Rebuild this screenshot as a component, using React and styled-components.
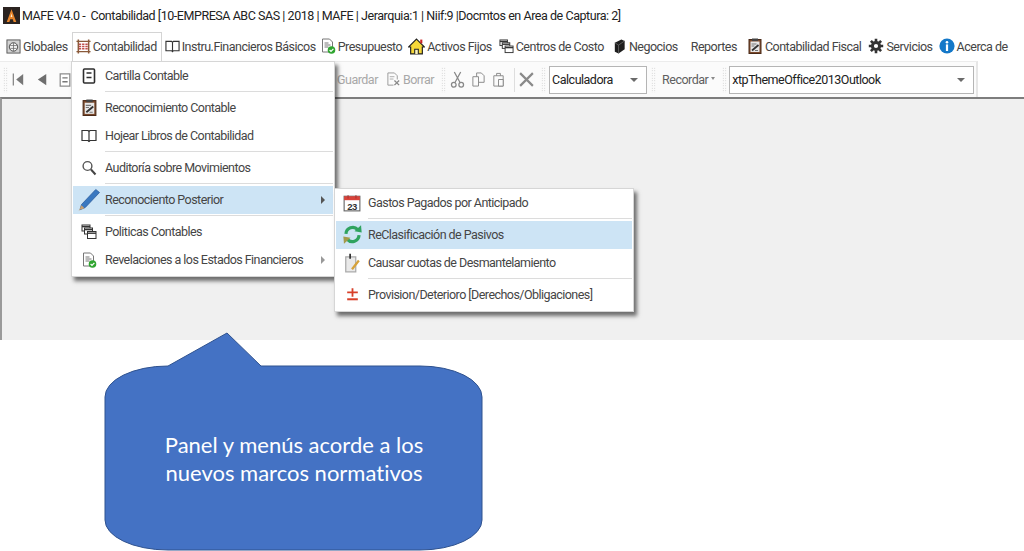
import React from 'react';
import styled, { createGlobalStyle } from 'styled-components';

const GlobalStyle = createGlobalStyle`
  html, body { margin: 0; padding: 0; background: #fff; }
  body { font-family: Roboto, "Liberation Sans", sans-serif; }
`;

const Page = styled.div`
  position: relative;
  width: 1024px;
  height: 551px;
  overflow: hidden;
  background: #fff;
`;

const TitleBar = styled.div`
  display: flex;
  align-items: center;
  height: 31px;
  padding-left: 3px;
  gap: 2px;
  font-size: 12.5px;
  letter-spacing: -0.45px;
  color: #222;
  white-space: pre;
`;

const MenuBar = styled.div`
  display: flex;
  align-items: center;
  height: 30px;
  padding-left: 6px;
`;

const MenuItem = styled.div`
  display: flex;
  align-items: center;
  gap: 2px;
  margin-left: ${(p) => p.$ml || 0}px;
  font-size: 12.5px;
  letter-spacing: -0.5px;
  color: #454545;
  white-space: nowrap;
`;

const ActiveTab = styled(MenuItem)`
  height: 29px;
  box-sizing: border-box;
  width: 90px;
  padding-left: 3px;
  border: 1px solid #d4d4d4;
  border-bottom: 0;
  background: #fff;
  position: relative;
  z-index: 3;
`;

const ToolBar = styled.div`
  display: flex;
  align-items: center;
  height: 36px;
  width: 978px;
  box-sizing: border-box;
  padding-left: 3px;
  border-top: 1px solid #ececec;
  border-right: 2px solid #e6e6e6;
  background: #fbfbfb;
`;

const Grip = styled.div`
  width: 5px;
  height: 26px;
  margin-left: ${(p) => p.$ml || 0}px;
  flex: none;
  background-image: radial-gradient(#c8c8c8 0.7px, transparent 0.8px);
  background-size: 2.5px 2.5px;
`;

const Tool = styled.div`
  display: flex;
  align-items: center;
  flex: none;
  gap: 2px;
  margin-left: ${(p) => p.$ml || 0}px;
  font-size: 12.5px;
  letter-spacing: -0.5px;
  color: ${(p) => (p.$strong ? '#5f5f5f' : '#a8a8a8')};
  white-space: nowrap;
`;

const ToolDivider = styled.div`
  width: 1px;
  height: 24px;
  flex: none;
  margin-left: ${(p) => p.$ml || 0}px;
  background: #dedede;
`;

const Combo = styled.div`
  display: flex;
  align-items: center;
  justify-content: space-between;
  flex: none;
  box-sizing: border-box;
  width: ${(p) => p.$w}px;
  height: 28px;
  margin-left: ${(p) => p.$ml || 0}px;
  padding: 0 8px 0 2px;
  border: 1px solid #b5b5b5;
  background: #fff;
  font-size: 12.5px;
  letter-spacing: -0.5px;
  color: #222;
`;

const ComboArrow = styled.span`
  width: 0;
  height: 0;
  border-left: 4px solid transparent;
  border-right: 4px solid transparent;
  border-top: 4px solid #6a6a6a;
`;

const SmallArrow = styled.span`
  width: 0;
  height: 0;
  margin-top: -3px;
  margin-left: 1px;
  border-left: 2.5px solid transparent;
  border-right: 2.5px solid transparent;
  border-top: 3px solid #8a8a8a;
`;

const Panel = styled.div`
  height: 243px;
  box-sizing: border-box;
  border-top: 2px solid #7d7d7d;
  border-left: 2px solid #9a9a9a;
  background: #f0f0f0;
`;

const Menu = styled.div`
  position: absolute;
  left: ${(p) => p.$left}px;
  top: ${(p) => p.$top}px;
  width: ${(p) => p.$w}px;
  box-sizing: border-box;
  padding-bottom: 2px;
  background: #fff;
  border: 1px solid #d6d6d6;
  box-shadow: 3px 4px 4px rgba(0, 0, 0, 0.55);
  z-index: ${(p) => p.$z || 2};
`;

const Row = styled.div`
  position: relative;
  display: flex;
  align-items: center;
  box-sizing: border-box;
  height: 28px;
  margin: 0 1px;
  padding-bottom: 1px;
  background: ${(p) => (p.$active ? '#cde4f5' : 'transparent')};
  font-size: 12.5px;
  letter-spacing: -0.54px;
  color: #454545;
  white-space: nowrap;
`;

const RowIcon = styled.span`
  display: flex;
  justify-content: center;
  align-items: center;
  width: 32px;
  flex: none;
`;

const RowCaret = styled.span`
  position: absolute;
  right: 8px;
  top: 10px;
  width: 0;
  height: 0;
  border-top: 4px solid transparent;
  border-bottom: 4px solid transparent;
  border-left: 4px solid ${(p) => (p.$dark ? '#555' : '#999')};
`;

const MenuSep = styled.div`
  height: 1px;
  margin: 1px 1px 2px 33px;
  background: #dcdcdc;
`;

const Callout = styled.div`
  position: absolute;
  left: 104px;
  top: 332px;
  width: 380px;
  height: 219px;
  z-index: 4;
`;

const CalloutShape = styled.svg`
  display: block;
  width: 380px;
  height: 219px;
`;

const CalloutText = styled.div`
  position: absolute;
  inset: 34px 0 0 0;
  display: flex;
  align-items: center;
  justify-content: center;
  text-align: center;
  font-family: Lato, "Open Sans", sans-serif;
  font-size: 22px;
  line-height: 28px;
  font-variant-ligatures: none;
  color: #fff;
`;

const Ico = ({ size = 16, children }) => (
  <svg width={size} height={size} viewBox="0 0 16 16" style={{ flex: 'none', display: 'block' }}>
    {children}
  </svg>
);

const AppLogo = () => (
  <Ico size={17}>
    <rect width="16" height="16" fill="#2b2320" />
    <path d="M8 2 L12.5 14 H10 L9.2 11.5 H6.8 L6 14 H3.5Z" fill="#e8862c" />
    <path d="M8 6 L8.8 9.5 H7.2Z" fill="#fff2d8" />
  </Ico>
);
const Globe = () => (
  <Ico size={15}>
    <rect x="1" y="1" width="14" height="14" fill="#d2d2d2" stroke="#555" />
    <circle cx="8" cy="8.5" r="4.5" fill="#f4f4f4" stroke="#444" />
    <path d="M4 7h8M4.5 10h7M8 4v9" stroke="#666" strokeWidth=".8" />
  </Ico>
);
const Abacus = () => (
  <Ico size={15}>
    <path d="M2.5 .5v15M13.5 .5v15" stroke="#8a5a3a" strokeWidth="1.6" />
    <path d="M.5 2.5h15M.5 13.5h15" stroke="#8a5a3a" strokeWidth="1.4" />
    <path d="M3 5.5h10M3 8h10M3 10.5h10" stroke="#c0504d" strokeWidth="1.6" strokeDasharray="2.5 1" />
  </Ico>
);
const Book = ({ size = 15 }) => (
  <Ico size={size}>
    <path d="M1 2.5h6l1 1 1-1h6v10H9l-1 1-1-1H1z" fill="#fff" stroke="#333" strokeWidth="1.2" />
    <path d="M8 3.5v10" stroke="#333" strokeWidth="1.2" />
  </Ico>
);
const DocCheck = () => (
  <Ico size={16}>
    <path d="M2.5 1h7l3 3v10h-10z" fill="#fff" stroke="#777" />
    <path d="M4.5 5h4M4.5 7h6M4.5 9h4" stroke="#777" />
    <circle cx="11.5" cy="12" r="3.8" fill="#2fa52f" />
    <path d="M9.6 12l1.4 1.4 2.4-2.6" stroke="#fff" strokeWidth="1.2" fill="none" />
  </Ico>
);
const House = () => (
  <Ico size={17}>
    <path d="M8 1 L15.5 8.5 H13.5 V15 H2.5 V8.5 H.5Z" fill="#f6d838" stroke="#222" strokeWidth="1.1" />
    <path d="M6.3 15v-4.5h3.4V15" fill="#fff7c0" stroke="#222" />
    <rect x="11.5" y="1.5" width="2" height="3.5" fill="#c22" />
  </Ico>
);
const Windows = ({ size = 15 }) => (
  <Ico size={size}>
    <rect x="1" y="1" width="8" height="6" fill="#fff" stroke="#333" />
    <path d="M1 2.6h8" stroke="#333" strokeWidth="1.4" />
    <rect x="3.5" y="4" width="8" height="6" fill="#fff" stroke="#333" />
    <path d="M3.5 5.6h8" stroke="#333" strokeWidth="1.4" />
    <rect x="6.5" y="7.5" width="8.5" height="7" fill="#fff" stroke="#333" />
    <path d="M6.5 9.2h8.5" stroke="#333" strokeWidth="1.4" />
  </Ico>
);
const BlackBook = () => (
  <Ico size={15}>
    <path d="M3 4 L10 .5 L13.5 2 L13.5 11 L7 15.5 L3 13.5Z" fill="#1e1e1e" />
    <path d="M7 6.5v9M7 6.5l6.5-4.5M3 4l4 2.5" stroke="#777" strokeWidth=".7" fill="none" />
  </Ico>
);
const Clipboard = ({ size = 17 }) => (
  <Ico size={size}>
    <rect x="2" y="1.5" width="12" height="14" fill="#7d4a2c" stroke="#4a2a18" />
    <rect x="3.5" y="3.5" width="9" height="10.5" fill="#e8e8e8" />
    <rect x="5" y=".5" width="6" height="2.5" fill="#444" />
    <path d="M5 12.5 L11.5 7" stroke="#333" strokeWidth="1.8" />
    <path d="M4.5 6h5M4.5 8h3M8 12.5h3" stroke="#777" />
  </Ico>
);
const Gear = () => (
  <Ico size={16}>
    <circle cx="8" cy="8" r="3.6" fill="none" stroke="#333" strokeWidth="3" />
    <path d="M8 .8v3M8 12.2v3M.8 8h3M12.2 8h3M2.9 2.9l2.1 2.1M11 11l2.1 2.1M13.1 2.9L11 5M5 11l-2.1 2.1" stroke="#333" strokeWidth="2.6" />
  </Ico>
);
const Info = () => (
  <Ico size={16}>
    <circle cx="8" cy="8" r="7.6" fill="#1478c8" />
    <circle cx="8" cy="4.2" r="1.3" fill="#fff" />
    <rect x="6.9" y="6.4" width="2.2" height="6.6" fill="#fff" />
  </Ico>
);
const Card = () => (
  <Ico size={16}>
    <rect x="2.5" y="1" width="11" height="14" rx="1" fill="#fff" stroke="#2e2e2e" strokeWidth="1.6" />
    <path d="M5.5 5h5M5.5 9.5h5" stroke="#2e2e2e" strokeWidth="1.7" />
  </Ico>
);
const Lens = () => (
  <Ico size={16}>
    <circle cx="6.5" cy="6" r="4.4" fill="#fff" stroke="#555" strokeWidth="1.4" />
    <path d="M10 9.5l4.5 5" stroke="#444" strokeWidth="2" />
  </Ico>
);
const Pencil = () => (
  <Ico size={24}>
    <path d="M12.5 1 L15 3 L5.5 13 L2 14.5 L3 11Z" fill="#3a78c0" stroke="#2a5a9a" strokeWidth=".5" />
    <path d="M2 14.5 L1 15.5 L3 11.5 L5 13.5Z" fill="#c9a070" />
  </Ico>
);
const Calendar = () => (
  <Ico size={18}>
    <rect x="1" y="2" width="14" height="13" fill="#fff" stroke="#666" />
    <rect x="1" y="2" width="14" height="3.5" fill="#d9423a" />
    <path d="M4.5 1v3M11.5 1v3" stroke="#a33" />
    <text x="8" y="13.8" textAnchor="middle" fontSize="8.5" fontWeight="700" fontFamily="Liberation Sans" fill="#333">23</text>
  </Ico>
);
const Refresh = () => (
  <Ico size={21}>
    <path d="M3 7.5a5.2 5.2 0 0 1 9-3.2" fill="none" stroke="#2fa35f" strokeWidth="2.4" />
    <path d="M9.5 5.5 L15 6.5 L14.5 1Z" fill="#2fa35f" />
    <path d="M13 8.5a5.2 5.2 0 0 1-9 3.2" fill="none" stroke="#2fa35f" strokeWidth="2.4" />
    <path d="M6.5 10.5 L1 9.5 L1.5 15Z" fill="#a39a4a" />
  </Ico>
);
const NotePen = () => (
  <Ico size={20}>
    <path d="M3 3h8v12H3z" fill="#e9e9e9" stroke="#aaa" />
    <path d="M6.5 .5v4" stroke="#333" strokeWidth="1.4" />
    <path d="M13.5 6 L8 13" stroke="#d6a23a" strokeWidth="1.8" />
  </Ico>
);
const PlusMinus = () => (
  <Ico size={17}>
    <path d="M8 2v8M3 6h10" stroke="#d8402a" strokeWidth="1.7" />
    <path d="M3 12.5h10" stroke="#d8402a" strokeWidth="1.9" />
  </Ico>
);
const First = () => (
  <Ico size={15}>
    <path d="M2.5 1.5v13" stroke="#8a8a8a" strokeWidth="1.4" />
    <path d="M13 2v12L5.5 8z" fill="#777" />
  </Ico>
);
const Prev = () => (
  <Ico size={15}>
    <path d="M12 2v12L3 8z" fill="#6e6e6e" />
  </Ico>
);
const SmallCard = () => (
  <Ico size={14}>
    <rect x="2.5" y="1" width="11" height="14" fill="#fff" stroke="#8a8a8a" strokeWidth="1.4" />
    <path d="M5 5.5h6M5 10h6" stroke="#777" strokeWidth="1.5" />
  </Ico>
);
const Eraser = () => (
  <Ico size={15}>
    <path d="M2 1h7l3 3v4M2 1v13h6" fill="none" stroke="#999" />
    <path d="M4 5h5M4 7.5h4" stroke="#aaa" />
    <path d="M9 9l5 5M14 9l-5 5" stroke="#888" strokeWidth="1.4" />
  </Ico>
);
const Scissors = () => (
  <Ico size={17}>
    <path d="M5 1l5.5 10M11 1L5.5 11" stroke="#888" strokeWidth="1.2" />
    <circle cx="4.5" cy="13" r="2.2" fill="none" stroke="#888" strokeWidth="1.2" />
    <circle cx="11.5" cy="13" r="2.2" fill="none" stroke="#888" strokeWidth="1.2" />
  </Ico>
);
const CopyIcon = () => (
  <Ico size={15}>
    <path d="M6 1h5l3 3v7H6z" fill="#fbfbfb" stroke="#888" />
    <path d="M2 5h6v10H2z" fill="#fbfbfb" stroke="#888" />
  </Ico>
);
const PasteIcon = () => (
  <Ico size={15}>
    <path d="M3 4h10v11H3z" fill="none" stroke="#888" />
    <path d="M8 8h5v7H8z" fill="#fbfbfb" stroke="#888" />
    <path d="M6 4V1.5h4V4" fill="none" stroke="#888" />
  </Ico>
);
const Cross = () => (
  <Ico size={17}>
    <path d="M2 2l12 12M14 2L2 14" stroke="#8a8a8a" strokeWidth="2" />
  </Ico>
);

export default function App() {
  return (
    <Page>
      <GlobalStyle />
      <TitleBar>
        <AppLogo />
        MAFE V4.0 -  Contabilidad [10-EMPRESA ABC SAS | 2018 | MAFE | Jerarquia:1 | Niif:9 |Docmtos en Area de Captura: 2]
      </TitleBar>

      <MenuBar>
        <MenuItem><Globe />Globales</MenuItem>
        <ActiveTab $ml={4}><Abacus />Contabilidad</ActiveTab>
        <MenuItem $ml={3}><Book />Instru.Financieros Básicos</MenuItem>
        <MenuItem $ml={4}><DocCheck />Presupuesto</MenuItem>
        <MenuItem $ml={6}><House />Activos Fijos</MenuItem>
        <MenuItem $ml={7}><Windows />Centros de Costo</MenuItem>
        <MenuItem $ml={8}><BlackBook />Negocios</MenuItem>
        <MenuItem $ml={13}>Reportes</MenuItem>
        <MenuItem $ml={10}><Clipboard size={16} />Contabilidad Fiscal</MenuItem>
        <MenuItem $ml={7}><Gear />Servicios</MenuItem>
        <MenuItem $ml={6}><Info />Acerca de</MenuItem>
      </MenuBar>

      <ToolBar>
        <Grip />
        <Tool $ml={3}><First /></Tool>
        <Tool $ml={9}><Prev /></Tool>
        <Tool $ml={8}><SmallCard /></Tool>
        <Tool $ml={265}>Guardar</Tool>
        <Tool $ml={8}><Eraser />Borrar</Tool>
        <Grip $ml={7} />
        <Tool $ml={3}><Scissors /></Tool>
        <Tool $ml={5}><CopyIcon /></Tool>
        <Tool $ml={5}><PasteIcon /></Tool>
        <ToolDivider $ml={8} />
        <Tool $ml={3}><Cross /></Tool>
        <Grip $ml={6} />
        <Combo $w={98} $ml={3}>Calculadora<ComboArrow /></Combo>
        <Grip $ml={4} />
        <Tool $ml={6} $strong>Recordar<SmallArrow /></Tool>
        <Grip $ml={7} />
        <Combo $w={245} $ml={2}>xtpThemeOffice2013Outlook<ComboArrow /></Combo>
      </ToolBar>

      <Panel />

      <Menu $left={71} $top={61} $w={264}>
        <Row><RowIcon><Card /></RowIcon>Cartilla Contable</Row>
        <MenuSep />
        <Row><RowIcon><Clipboard /></RowIcon>Reconocimiento Contable</Row>
        <Row><RowIcon><Book size={16} /></RowIcon>Hojear Libros de Contabilidad</Row>
        <MenuSep />
        <Row><RowIcon><Lens /></RowIcon>Auditoría sobre Movimientos</Row>
        <MenuSep />
        <Row $active><RowIcon><Pencil /></RowIcon>Reconociento Posterior<RowCaret $dark /></Row>
        <MenuSep />
        <Row><RowIcon><Windows size={16} /></RowIcon>Politicas Contables</Row>
        <Row><RowIcon><DocCheck /></RowIcon>Revelaciones a los Estados Financieros<RowCaret /></Row>
      </Menu>

      <Menu $left={334} $top={188} $w={300} $z={3}>
        <Row><RowIcon><Calendar /></RowIcon>Gastos Pagados por Anticipado</Row>
        <MenuSep />
        <Row $active><RowIcon><Refresh /></RowIcon>ReClasificación de Pasivos</Row>
        <Row><RowIcon><NotePen /></RowIcon>Causar cuotas de Desmantelamiento</Row>
        <MenuSep />
        <Row><RowIcon><PlusMinus /></RowIcon>Provision/Deterioro [Derechos/Obligaciones]</Row>
      </Menu>

      <Callout>
        <CalloutShape viewBox="0 0 380 219">
          <path
            d="M64 34 L123 1 L157 34 L316 34 A62 31 0 0 1 378 65 L378 188 A62 30 0 0 1 316 218 L64 218 A63 30 0 0 1 1 188 L1 65 A63 31 0 0 1 64 34Z"
            fill="#4472c4"
            stroke="#2f528f"
          />
        </CalloutShape>
        <CalloutText>Panel y menús acorde a los<br />nuevos marcos normativos</CalloutText>
      </Callout>
    </Page>
  );
}
